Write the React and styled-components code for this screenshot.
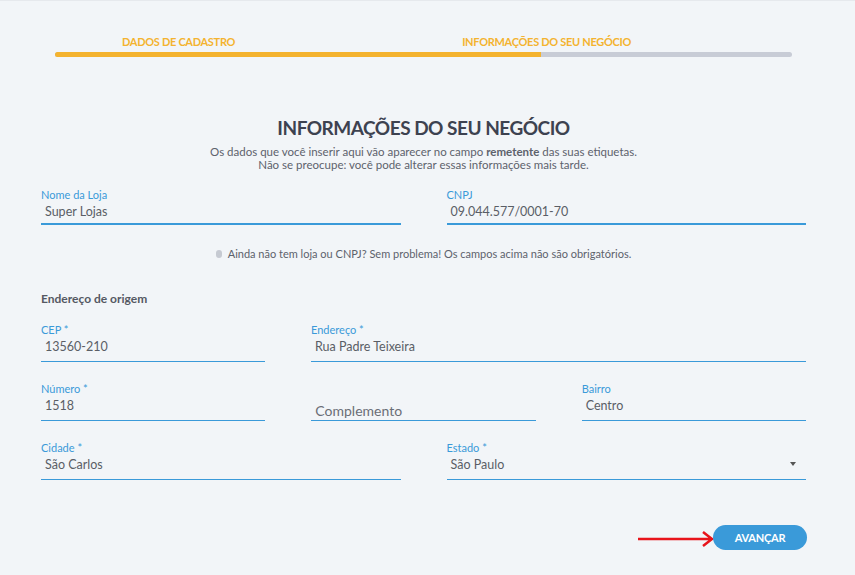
import React from "react";
import styled, { createGlobalStyle } from "styled-components";

const GlobalStyle = createGlobalStyle`
  html, body { margin: 0; background: #f2f5f8; }
  body { font-family: Lato, "Open Sans", sans-serif; }
`;

const Page = styled.div`
  width: 855px;
  height: 575px;
  box-sizing: border-box;
  padding: 0 49px 0 41px;
  border-top: 1px solid #e6e9ed;
`;

const Steps = styled.div`
  margin: 0 14px;
  padding-top: 34px;
`;

const StepLabels = styled.div`
  display: flex;
  font-size: 11px;
  font-weight: 700;
  color: #f4b32f;
  letter-spacing: -0.3px;
  height: 12px;
  span:first-child { margin-left: 67px; }
  span:last-child { margin-left: 227px; }
`;

const Track = styled.div`
  margin-top: 5px;
  height: 5px;
  border-radius: 3px;
  background: #c8ccd6;
  overflow: hidden;
`;

const Fill = styled.div`
  height: 100%;
  background: #f4b32f;
`;

const Title = styled.h1`
  margin: 59px 0 0;
  text-align: center;
  font-size: 19px;
  font-weight: 700;
  color: #3d4250;
  letter-spacing: -0.5px;
`;

const Sub = styled.p`
  margin: 6px 0 0;
  text-align: center;
  font-size: 11.5px;
  line-height: 13px;
  color: #5d626c;
  b { font-weight: 700; }
`;

const Row = styled.div`
  display: grid;
  grid-template-columns: ${p => p.cols};
  column-gap: 46px;
  margin-top: ${p => p.top}px;
`;

const Field = styled.div`
  border-bottom: ${p => (p.thick ? "2px" : "1px")} solid #3a9ad9;
  height: ${p => (p.thick ? 35 : 38)}px;
  position: relative;
`;

const Label = styled.div`
  font-size: 11px;
  color: #3a9ad9;
  height: 14px;
`;

const Value = styled.div`
  font-size: 12.5px;
  color: #5a5e66;
  padding-left: 4px;
  margin-top: 2px;
`;

const Placeholder = styled.div`
  font-size: 14px;
  color: #6a6e76;
  padding: 20px 0 0 4px;
`;

const Caret = styled.div`
  position: absolute;
  right: 10px;
  bottom: 13px;
  border: 3.5px solid transparent;
  border-top: 4px solid #555;
  border-bottom: 0;
`;

const Note = styled.div`
  margin-top: 22px;
  text-align: center;
  font-size: 11px;
  color: #5d626c;
  display: flex;
  align-items: center;
  justify-content: center;
  gap: 6px;
`;

const Dot = styled.span`
  width: 6px;
  height: 8px;
  border-radius: 3px;
  background: #c6cad2;
`;

const Section = styled.div`
  margin-top: 31px;
  font-size: 12px;
  font-weight: 700;
  color: #555963;
`;

const Footer = styled.div`
  display: flex;
  justify-content: flex-end;
  align-items: center;
  margin-top: 45px;
  margin-right: -1px;
`;

const Button = styled.button`
  width: 94px;
  height: 25px;
  border: none;
  border-radius: 13px;
  background: #3a9ad9;
  color: #fff;
  font-family: inherit;
  font-size: 11px;
  font-weight: 700;
  letter-spacing: -0.2px;
`;

const F = ({ label, value, thick, ph, select }) => (
  <Field thick={thick}>
    {ph ? (
      <Placeholder>{ph}</Placeholder>
    ) : (
      <>
        <Label>{label}</Label>
        <Value>{value}</Value>
      </>
    )}
    {select && <Caret />}
  </Field>
);

export default function App() {
  return (
    <Page>
      <GlobalStyle />
      <Steps>
        <StepLabels>
          <span>DADOS DE CADASTRO</span>
          <span>INFORMAÇÕES DO SEU NEGÓCIO</span>
        </StepLabels>
        <Track>
          <Fill style={{ width: "66%" }} />
        </Track>
      </Steps>
      <Title>INFORMAÇÕES DO SEU NEGÓCIO</Title>
      <Sub>
        Os dados que você inserir aqui vão aparecer no campo <b>remetente</b> das suas etiquetas.
        <br />
        Não se preocupe: você pode alterar essas informações mais tarde.
      </Sub>
      <Row cols="1fr 1fr" top={17}>
        <F thick label="Nome da Loja" value="Super Lojas" />
        <F thick label="CNPJ" value="09.044.577/0001-70" />
      </Row>
      <Note>
        <Dot />
        Ainda não tem loja ou CNPJ? Sem problema! Os campos acima não são obrigatórios.
      </Note>
      <Section>Endereço de origem</Section>
      <Row cols="224px 1fr" top={17}>
        <F label="CEP *" value="13560-210" />
        <F label="Endereço *" value="Rua Padre Teixeira" />
      </Row>
      <Row cols="1fr 1fr 1fr" top={20}>
        <F label="Número *" value="1518" />
        <F ph="Complemento" />
        <F label="Bairro" value="Centro" />
      </Row>
      <Row cols="1fr 1fr" top={20}>
        <F label="Cidade *" value="São Carlos" />
        <F label="Estado *" value="São Paulo" select />
      </Row>
      <Footer>
        <svg width="80" height="20" viewBox="0 0 80 20" style={{ marginRight: -4 }}>
          <path d="M1 11 H74 M66 4 L75 11 L66 18" stroke="#e8141b" strokeWidth="2.5" fill="none" />
        </svg>
        <Button>AVANÇAR</Button>
      </Footer>
    </Page>
  );
}
